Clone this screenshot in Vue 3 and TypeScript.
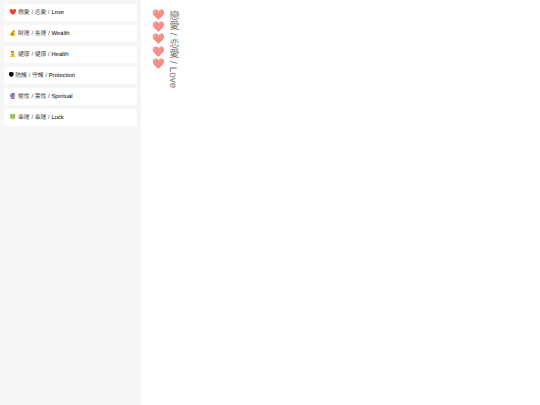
<script setup lang="ts">
interface Row { icon: string; text: string; en: string }
const rows: Row[] = [
  { icon: '❤️', text: ' 戀愛 / 恋愛 / ', en: 'Love' },
  { icon: '💰', text: ' 財運 / 金運 / ', en: 'Wealth' },
  { icon: '🧘', text: ' 健康 / 健康 / ', en: 'Health' },
  { icon: '', text: ' 防護 / 守護 / ', en: 'Protection' },
  { icon: '🔮', text: ' 靈性 / 霊性 / ', en: 'Spiritual' },
  { icon: '🍀', text: ' 幸運 / 幸運 / ', en: 'Luck' },
]
const hearts = [1, 2, 3, 4, 5]
</script>

<template>
  <div class="page">
    <aside class="side">
      <div v-for="r in rows" :key="r.en" class="row"><svg v-if="!r.icon" class="shield" viewBox="0 0 10 11"><path d="M0 1.2 5 0l5 1.2v4.3C10 8 7.5 10 5 11 2.5 10 0 8 0 5.5z" fill="#000" /></svg><span v-else>{{ r.icon }}</span>{{ r.text }}<span class="en">{{ r.en }}</span></div>
    </aside>
    <main class="main">
      <div class="hearts">
        <span v-for="h in hearts" :key="h" class="heart">❤️</span>
      </div>
      <div class="vtext">戀愛 / 恋愛 / Love</div>
    </main>
  </div>
</template>

<style>
html, body { margin: 0; background: #fff; }
</style>

<style scoped>
.page {
  display: flex;
  width: 540px;
  height: 405px;
  font-family: "Liberation Sans", "Noto Sans CJK TC", sans-serif;
  text-rendering: geometricPrecision;
  overflow: hidden;
}
.side {
  width: 141px;
  box-sizing: border-box;
  background: #f6f6f6;
  padding: 4px 4px 0;
  display: flex;
  flex-direction: column;
  gap: 4px;
}
.row {
  height: 17px;
  width: 133px;
  background: #fff;
  border-radius: 3px;
  padding: 1px 0 0 5px;
  box-sizing: border-box;
  font-size: 5.9px;
  line-height: 16px;
  white-space: pre;
  color: #444;
}
.shield {
  width: 4.6px;
  height: 5.2px;
  vertical-align: -0.6px;
}
.en { color: #000; }
.main {
  flex: 1;
  display: flex;
  align-items: flex-start;
  padding: 10px 0 0 11px;
}
.hearts {
  display: flex;
  flex-direction: column;
  width: 13px;
}
.heart {
  font-size: 10px;
  line-height: 12.2px;
  height: 12.2px;
  opacity: 0.6;
}
.vtext {
  writing-mode: vertical-rl;
  font-size: 10px;
  color: #777;
  white-space: nowrap;
}
</style>
